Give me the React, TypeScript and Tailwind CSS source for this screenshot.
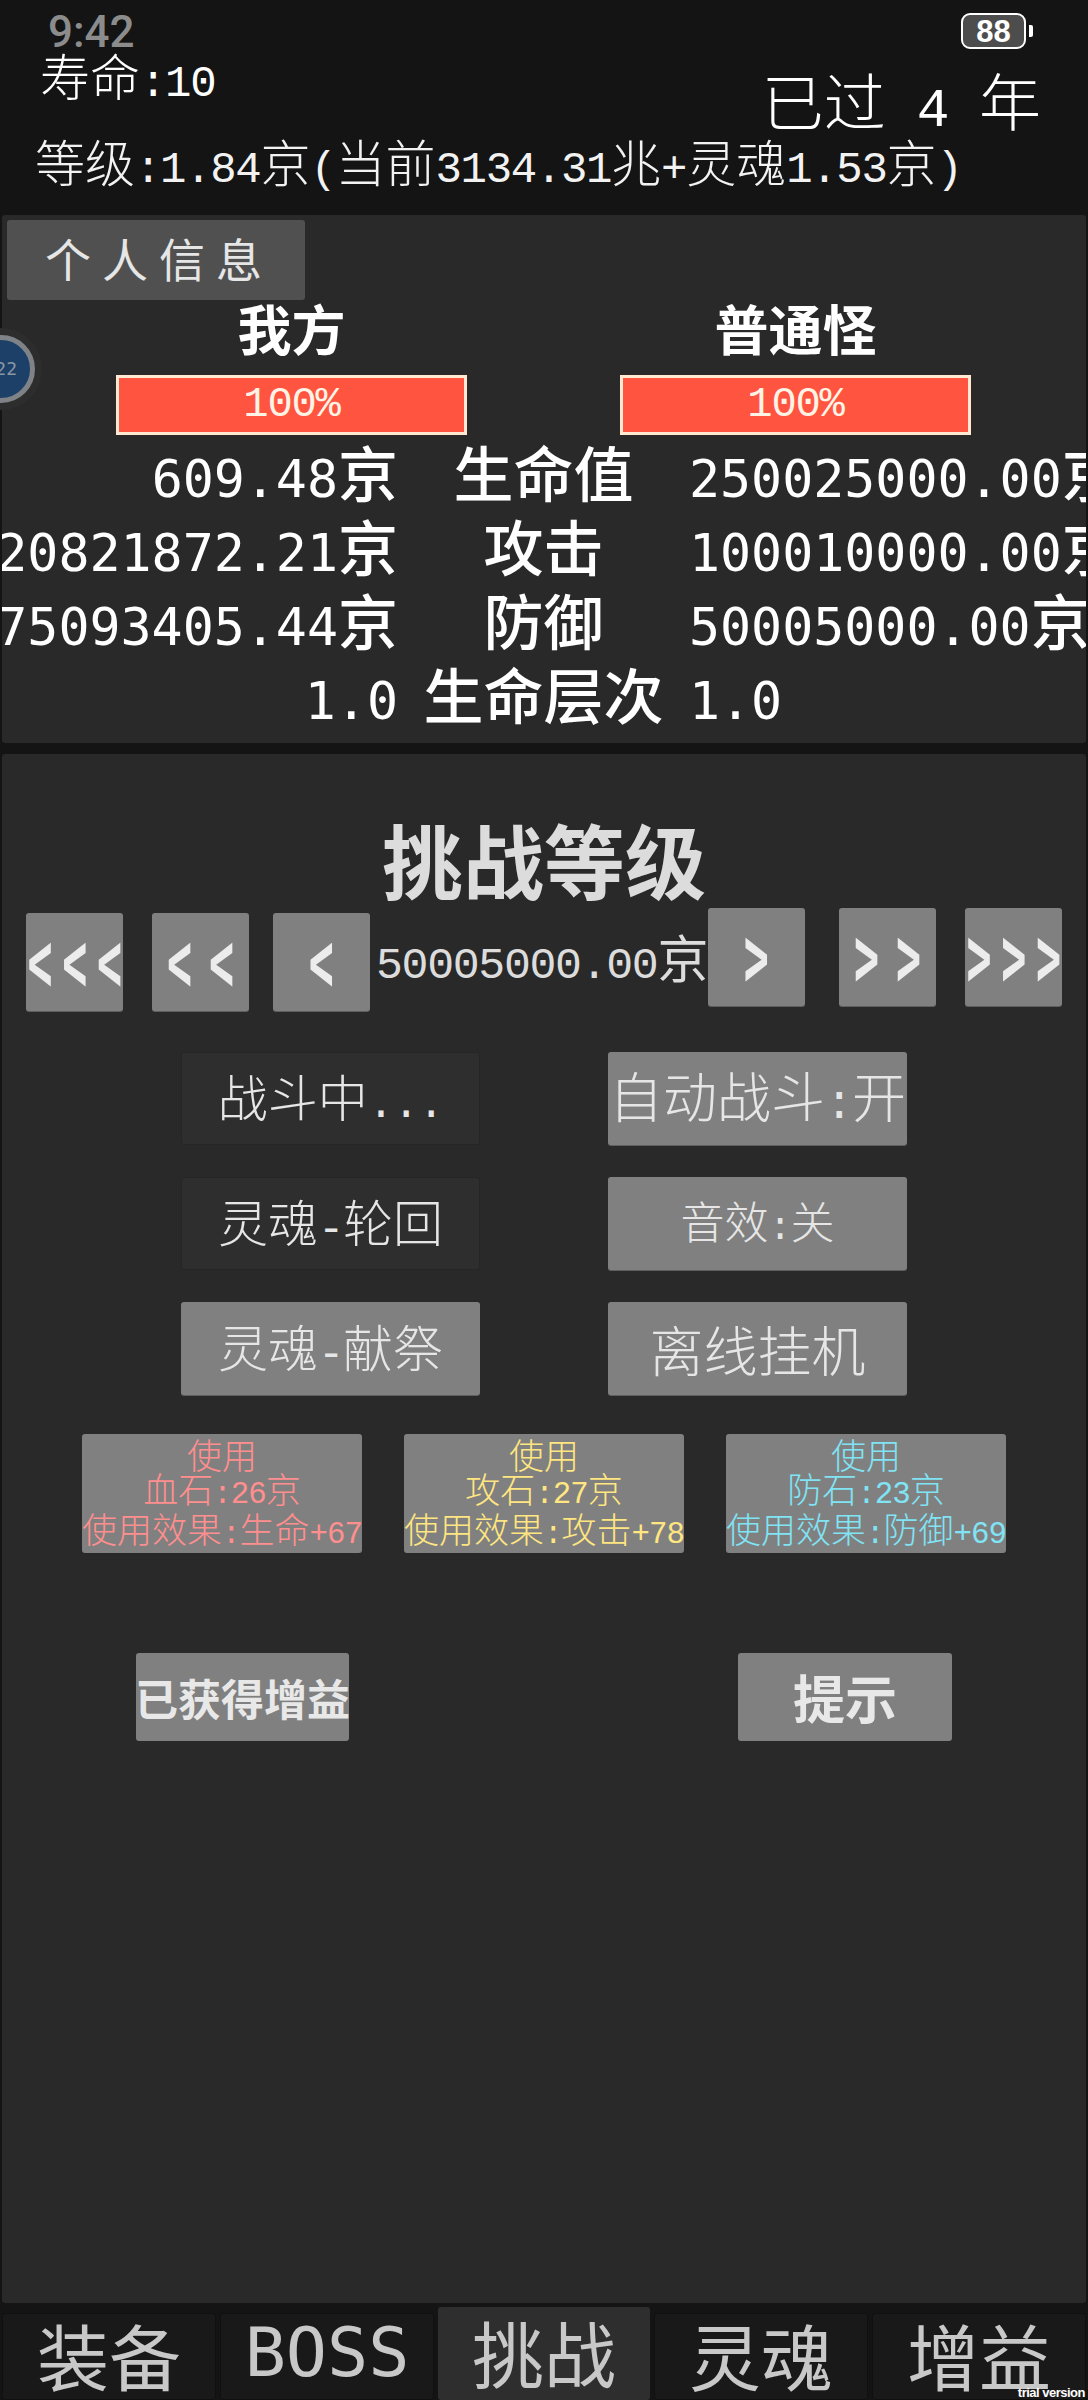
import React from "react";

function T({ s, asc = "[font-family:'Liberation_Mono',monospace] text-[0.88em] tracking-[-0.03em]" }: { s: string; asc?: string }) {
  const parts = s.split(/([\x00-\x7f]+)/).filter(Boolean);
  return (
    <>
      {parts.map((p, i) =>
        /^[\x00-\x7f]+$/.test(p) ? (
          <span key={i} className={`leading-none whitespace-pre ${asc}`}>
            {p}
          </span>
        ) : (
          <span key={i}>{p}</span>
        )
      )}
    </>
  );
}

const bold = "[font-family:'DejaVu_Sans_Mono',monospace] text-[0.86em]";

function Row({ l, m, r }: { l: string; m: string; r: string }) {
  return (
    <div className="grid grid-cols-[396px_291px_1fr] h-[74px] items-center text-[60px] leading-[74px] text-white font-medium whitespace-nowrap">
      <div className="flex justify-end"><span><T s={l} asc={bold} /></span></div>
      <div className="text-center"><T s={m} asc={bold} /></div>
      <div><T s={r} asc={bold} /></div>
    </div>
  );
}

function HpBar() {
  return (
    <div className="w-[351px] h-[60px] bg-[#ff5540] border-[3px] border-[#ffe9d2] flex items-center justify-center text-[48px] leading-none text-[#fff3e6]">
      <T s="100%" />
    </div>
  );
}

function Arrow({ s, cls, adv }: { s: string; cls: string; adv: string }) {
  return (
    <div className={`w-[97px] h-[98px] bg-[#808080] rounded-[3px] shadow-[0_1px_0_#5f5f5f] flex items-center justify-center overflow-hidden ${cls}`}>
      <span className={`inline-block shrink-0 scale-x-[0.65] scale-y-[1.3] [font-family:'DejaVu_Sans_Mono',monospace] font-bold text-[64px] leading-none text-[#ececec] whitespace-nowrap ${adv}`}>
        {s}
      </span>
    </div>
  );
}

function Action({ s, on, size }: { s: string; on: boolean; size: string }) {
  return (
    <div
      className={`h-[93px] rounded-[3px] flex items-center justify-center whitespace-nowrap font-light leading-none text-[#e6e6e6] ${size} ${
        on ? "bg-[#808080] shadow-[0_1px_0_#5f5f5f]" : "bg-[#2e2e2e] border border-[#262626]"
      }`}
    >
      <span><T s={s} /></span>
    </div>
  );
}

function Stone({ lines, color }: { lines: string[]; color: string }) {
  return (
    <div className={`w-[280px] h-[119px] bg-[#808080] rounded-[3px] flex flex-col items-center justify-center text-[35px] leading-[34px] font-light whitespace-nowrap ${color}`}>
      {lines.map((l) => (
        <div key={l}><T s={l} /></div>
      ))}
    </div>
  );
}

function Tab({ s, active }: { s: string; active?: boolean }) {
  return (
    <div
      className={`flex-1 rounded-[3px] flex items-center justify-center pb-[6px] text-[#c8c8c8] leading-none whitespace-nowrap text-[72px] ${
        active ? "h-[93px] bg-[#2e2e2e]" : "h-[87px] bg-[#191919] border border-[#101010]"
      }`}
    >
      <T s={s} asc="[font-family:'DejaVu_Sans_Mono',monospace] text-[0.95em]" />
    </div>
  );
}

export default function App() {
  return (
    <div className="relative w-[1088px] h-[2400px] overflow-hidden bg-[#141414] flex flex-col [font-family:'Noto_Sans_CJK_SC',sans-serif]">
      {/* game header */}
      <div className="h-[215px] shrink-0 pt-[46px] pl-[35px] pr-[47px] text-white font-light">
        <div className="flex justify-between items-start h-[86px]">
          <div className="pl-[5px] text-[50px] leading-[56px]"><T s="寿命:10" /></div>
          <div className="mt-[18px] text-[62px] leading-[70px] whitespace-pre"><T s="已过 4 年" /></div>
        </div>
        <div className="text-[50px] leading-[56px] whitespace-nowrap text-[#f2f2f2]">
          <T s="等级:1.84京(当前3134.31兆+灵魂1.53京)" />
        </div>
      </div>

      {/* battle panel */}
      <div className="mx-[2px] h-[528px] shrink-0 bg-[#292929] rounded-[3px] overflow-hidden">
        <div className="ml-[5px] mt-[5px] w-[298px] h-[80px] pb-[6px] pl-[6px] bg-[#505050] rounded-[3px] flex items-center justify-center text-[46px] leading-none tracking-[11px] text-[#e6e6e6]">
          个人信息
        </div>
        <div className="grid grid-cols-[351px_351px] gap-x-[153px] ml-[114px] mt-[-2px] text-[54px] leading-[60px] font-bold text-white text-center">
          <div>我方</div>
          <div>普通怪</div>
        </div>
        <div className="flex gap-x-[153px] ml-[114px] mt-[17px] mb-[-1px]">
          <HpBar />
          <HpBar />
        </div>
        <Row l="609.48京" m="生命值" r="250025000.00京" />
        <Row l="20821872.21京" m="攻击" r="100010000.00京" />
        <Row l="75093405.44京" m="防御" r="50005000.00京" />
        <Row l="1.0" m="生命层次" r="1.0" />
      </div>

      {/* challenge panel */}
      <div className="mx-[2px] mt-[11px] h-[1549px] shrink-0 bg-[#292929] rounded-[3px] overflow-hidden">
        <div className="pt-[61px] text-center text-[81px] leading-[86px] font-bold text-[#dcdcdc]">挑战等级</div>
        <div className="mt-[7px] h-[103px] flex pl-[24px]">
          <Arrow s="<<<" cls="self-end" adv="tracking-[15px] pl-[15px]" />
          <Arrow s="<<" cls="self-end ml-[29px]" adv="tracking-[26px] pl-[26px]" />
          <Arrow s="<" cls="self-end ml-[24px]" adv="" />
          <div className="w-[338px] pl-[6px] self-center text-center text-[51px] leading-none text-[#dcdcdc] whitespace-nowrap">
            <T s="50005000.00京" />
          </div>
          <Arrow s=">" cls="self-start" adv="" />
          <Arrow s=">>" cls="self-start ml-[34px]" adv="tracking-[26px] pl-[26px]" />
          <Arrow s=">>>" cls="self-start ml-[29px]" adv="tracking-[15px] pl-[15px]" />
        </div>

        <div className="mt-[41px] ml-[179px] grid grid-cols-[299px_299px] gap-x-[128px] gap-y-[32px]">
          <Action s="战斗中..." on={false} size="text-[50px]" />
          <Action s="自动战斗:开" on size="text-[54px]" />
          <Action s="灵魂-轮回" on={false} size="text-[50px]" />
          <Action s="音效:关" on size="text-[44px]" />
          <Action s="灵魂-献祭" on size="text-[50px]" />
          <Action s="离线挂机" on size="text-[54px]" />
        </div>

        <div className="mt-[39px] ml-[80px] flex gap-x-[42px]">
          <Stone color="text-[#ff8f8f]" lines={["使用", "血石:26京", "使用效果:生命+67"]} />
          <Stone color="text-[#ffe680]" lines={["使用", "攻石:27京", "使用效果:攻击+78"]} />
          <Stone color="text-[#80e4f5]" lines={["使用", "防石:23京", "使用效果:防御+69"]} />
        </div>

        <div className="mt-[100px] ml-[134px] flex gap-x-[389px]">
          <div className="w-[213px] h-[88px] bg-[#808080] rounded-[3px] flex items-center justify-center text-[43px] leading-none font-bold text-[#e8e8e8] whitespace-nowrap">
            已获得增益
          </div>
          <div className="w-[214px] h-[88px] bg-[#808080] rounded-[3px] flex items-center justify-center text-[52px] leading-none font-bold text-[#e8e8e8]">
            提示
          </div>
        </div>
      </div>

      {/* bottom tabs */}
      <div className="mx-[2px] mt-[2px] h-[95px] flex items-end gap-x-[4px]">
        <Tab s="装备" />
        <Tab s="BOSS" />
        <Tab s="挑战" active />
        <Tab s="灵魂" />
        <Tab s="增益" />
      </div>

      {/* system status bar */}
      <div className="absolute left-[48px] top-[7px] [font-family:Roboto,sans-serif] font-medium text-[44px] leading-[50px] text-[#8c8c8c]">
        9:42
      </div>
      <div className="absolute left-[961px] top-[13px] flex items-center">
        <div className="w-[65px] h-[36px] rounded-[9px] border-2 border-white bg-[#4d4d4d] flex items-center justify-center [font-family:'Liberation_Sans',sans-serif] font-bold text-[31px] leading-none text-white">
          88
        </div>
        <div className="ml-[3px] w-[4px] h-[12px] rounded-r-[2px] bg-white" />
      </div>

      {/* floating ball */}
      <div className="absolute left-[-33px] top-[335px] w-[68px] h-[68px] rounded-full bg-[#1d4068] border-[5px] border-[#7f8388] shadow-[0_0_0_7px_#2d2d2d] flex items-center justify-end pr-[13px] [font-family:'DejaVu_Sans_Mono',monospace] text-[18px] leading-none text-[#8a97a5]">
        22
      </div>

      {/* watermark */}
      <div className="absolute right-[3px] bottom-[1px] [font-family:'Liberation_Sans',sans-serif] font-bold text-[13px] leading-none tracking-[-0.5px] text-white">
        trial version
      </div>
    </div>
  );
}
